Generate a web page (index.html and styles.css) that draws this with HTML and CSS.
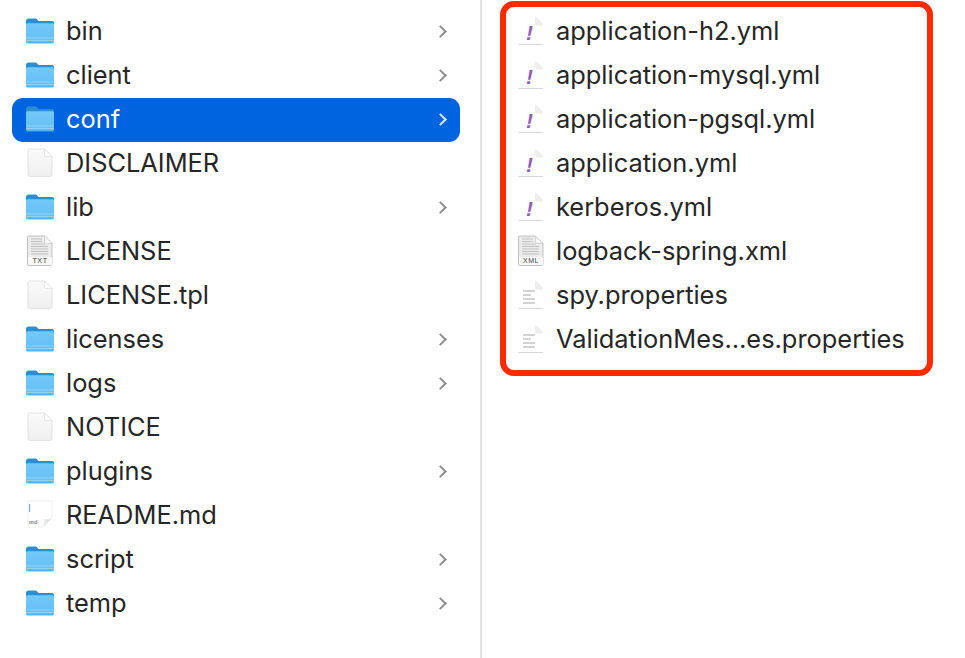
FILE: index.html
```html
<!DOCTYPE html>
<html lang="en">
<head>
<meta charset="utf-8">
<title>conf</title>
<link rel="stylesheet" href="styles.css">
</head>
<body>
<svg class="defs" width="0" height="0" aria-hidden="true">
  <defs>
    <linearGradient id="fbody" x1="0" y1="0" x2="0" y2="1">
      <stop offset="0" stop-color="#74c8fa"/>
      <stop offset="1" stop-color="#62bdf5"/>
    </linearGradient>
    <linearGradient id="dbody" x1="0" y1="0" x2="0" y2="1">
      <stop offset="0" stop-color="#fafafa"/>
      <stop offset="1" stop-color="#efefef"/>
    </linearGradient>
    <symbol id="folder" viewBox="0 0 28 28">
      <path d="M0 4.500C0 2.800 1 1.600 2.600 1.600H9c1 0 1.600.3 2.300 1.100L12.600 4H26c1.200 0 2 .8 2 2v18c0 1.400-.8 2-2 2H2c-1.200 0-2-.6-2-2Z" fill="#2a8fd2"/>
      <path d="M0 8C0 6.800 .8 6.200 2 6.200H26c1.200 0 2 .6 2 1.800V24c0 1.200-.8 1.800-2 1.800H2c-1.200 0-2-.6-2-1.800Z" fill="url(#fbody)"/>
      <rect x="0" y="20.500" width="28" height="1" fill="#8fd3fa"/>
      <rect x="0" y="23" width="28" height="1" fill="#8fd3fa"/>
      <path d="M0 24.800c0 1 .8 1.400 2 1.400H26c1.200 0 2-.4 2-1.400v.8c0 .9-.8 1.400-2 1.400H2C.8 27 0 26.500 0 25.600Z" fill="#9a9a9a" opacity=".6"/>
    </symbol>
    <symbol id="doc" viewBox="0 0 26 30">
      <path d="M2.500 1H17l7.500 7.500V26.500a2 2 0 0 1-2 2H2.500a2 2 0 0 1-2-2V3a2 2 0 0 1 2-2Z" transform="translate(.5 0)" fill="url(#dbody)" stroke="#dcdcdc" stroke-width=".8"/>
      <path d="M17.500 1V7a1.500 1.500 0 0 0 1.500 1.500H25Z" fill="#fff" stroke="#d8d8d8" stroke-width=".6"/>
    </symbol>
    <symbol id="lined" viewBox="0 0 26 32">
      <path d="M2 1H17.500L25 8.500V29a1.500 1.500 0 0 1-1.500 1.500H2A1.500 1.500 0 0 1 .5 29V2.500A1.500 1.500 0 0 1 2 1Z" fill="#ececec" stroke="#b4b4b4" stroke-width=".8"/>
      <path d="M17.500 1V7a1.500 1.500 0 0 0 1.500 1.500H25Z" fill="#fafafa" stroke="#c4c4c4" stroke-width=".6"/>
      <path d="M4 4h11M4 6.500h11M4 9h14M4 11.500h17M4 14h17M4 16.500h17M4 19h17" stroke="#c0c0c0" stroke-width="1"/>
      <path d="M1 22H25V29a1 1 0 0 1-1 1H2a1 1 0 0 1-1-1Z" fill="#f7f7f7"/>
    </symbol>
    <symbol id="plain" viewBox="0 0 26 30">
      <path d="M1 1H17.500L25 8.500V28H1Z" fill="#fff"/>
      <path d="M17 1.500H19L25 8V9.500H19.500A2.500 2.500 0 0 1 17 7Z" fill="#eee"/>
      <path d="M.5 28.500H25" stroke="#d6d6d6" stroke-width="1"/>
    </symbol>
  </defs>
</svg>

<main class="browser">
  <section class="column column-left">
    <div class="row"><svg class="ficon"><use href="#folder"/></svg><span class="name">bin</span><span class="chev"></span></div>
    <div class="row"><svg class="ficon"><use href="#folder"/></svg><span class="name">client</span><span class="chev"></span></div>
    <div class="row selected"><svg class="ficon"><use href="#folder"/></svg><span class="name">conf</span><span class="chev"></span></div>
    <div class="row"><svg class="dicon"><use href="#doc"/></svg><span class="name">DISCLAIMER</span></div>
    <div class="row"><svg class="ficon"><use href="#folder"/></svg><span class="name">lib</span><span class="chev"></span></div>
    <div class="row">
      <svg class="dicon tall" viewBox="0 0 26 32"><use href="#lined"/><text class="tag" x="13" y="28.200">TXT</text></svg>
      <span class="name">LICENSE</span>
    </div>
    <div class="row"><svg class="dicon"><use href="#doc"/></svg><span class="name">LICENSE.tpl</span></div>
    <div class="row"><svg class="ficon"><use href="#folder"/></svg><span class="name">licenses</span><span class="chev"></span></div>
    <div class="row"><svg class="ficon"><use href="#folder"/></svg><span class="name">logs</span><span class="chev"></span></div>
    <div class="row"><svg class="dicon"><use href="#doc"/></svg><span class="name">NOTICE</span></div>
    <div class="row"><svg class="ficon"><use href="#folder"/></svg><span class="name">plugins</span><span class="chev"></span></div>
    <div class="row">
      <svg class="dicon" viewBox="0 0 26 30">
        <path d="M1 1H25V18L16 27H1Z" fill="#fff" stroke="#ececec" stroke-width=".8"/>
        <path d="M25 18C22 19.500 18 19.500 17 19C18 22 17.500 25 16 27Z" fill="#e4e4e4"/>
        <rect x="2" y="4" width="1.200" height="8" fill="#7fb0e6"/>
        <text class="tag tag-md" x="2" y="24">md</text>
      </svg>
      <span class="name">README.md</span>
    </div>
    <div class="row"><svg class="ficon"><use href="#folder"/></svg><span class="name">script</span><span class="chev"></span></div>
    <div class="row"><svg class="ficon"><use href="#folder"/></svg><span class="name">temp</span><span class="chev"></span></div>
  </section>

  <section class="column column-right">
    <div class="row"><svg class="dicon" viewBox="0 0 26 30"><use href="#plain"/><text class="bang" x="11.500" y="24">!</text></svg><span class="name">application-h2.yml</span></div>
    <div class="row"><svg class="dicon" viewBox="0 0 26 30"><use href="#plain"/><text class="bang" x="11.500" y="24">!</text></svg><span class="name">application-mysql.yml</span></div>
    <div class="row"><svg class="dicon" viewBox="0 0 26 30"><use href="#plain"/><text class="bang" x="11.500" y="24">!</text></svg><span class="name">application-pgsql.yml</span></div>
    <div class="row"><svg class="dicon" viewBox="0 0 26 30"><use href="#plain"/><text class="bang" x="11.500" y="24">!</text></svg><span class="name">application.yml</span></div>
    <div class="row"><svg class="dicon" viewBox="0 0 26 30"><use href="#plain"/><text class="bang" x="11.500" y="24">!</text></svg><span class="name">kerberos.yml</span></div>
    <div class="row">
      <svg class="dicon tall" viewBox="0 0 26 32"><use href="#lined"/><text class="tag" x="13" y="28.200">XML</text></svg>
      <span class="name">logback-spring.xml</span>
    </div>
    <div class="row">
      <svg class="dicon" viewBox="0 0 26 30"><use href="#plain"/><path class="lines" d="M5 11h12M5 15h8M5 19h12M5 23h12"/></svg>
      <span class="name">spy.properties</span>
    </div>
    <div class="row">
      <svg class="dicon" viewBox="0 0 26 30"><use href="#plain"/><path class="lines" d="M5 11h12M5 15h8M5 19h12M5 23h12"/></svg>
      <span class="name">ValidationMes…es.properties</span>
    </div>
    <div class="highlight"></div>
  </section>
</main>
</body>
</html>
```

FILE: styles.css
```css
* { box-sizing: border-box; }

html, body {
  margin: 0;
  height: 658px;
  background: #fff;
  overflow: hidden;
}

.defs { position: absolute; }

.browser {
  display: flex;
  height: 658px;
  font-family: Inter, "Liberation Sans", sans-serif;
  font-size: 25.4px;
  color: #262626;
}

.column { padding-top: 10px; }

.column-left {
  width: 482px;
  padding-left: 12px;
  padding-right: 20px;
  border-right: 2px solid #e4e4e4;
}

.column-right {
  position: relative;
  flex: 1;
  padding-left: 24px;
}

.row {
  display: flex;
  align-items: center;
  height: 44px;
  padding: 0 13px 2px 14px;
  border-radius: 11px;
}

.column-right .row { padding-left: 11px; }

.selected {
  background: #0064e1;
  color: #fff;
}

.ficon { flex: none; width: 28px; height: 28px; margin-right: 13px; }

.dicon { flex: none; width: 26px; height: 30px; margin-left: 1px; margin-right: 13px; }

.tall { height: 32px; }

.column-right .dicon { margin-right: 12px; }

.name { flex: 1; margin-bottom: 2px; margin-left: -1px; white-space: nowrap; }

.dicon + .name { margin-left: 0; }

.chev {
  flex: none;
  width: 9px;
  height: 9px;
  margin-right: 2px;
  border-top: 2px solid #8e8e8e;
  border-right: 2px solid #8e8e8e;
  transform: rotate(45deg);
}

.selected .chev { border-color: #dce9fb; }

.tag {
  font-family: "Liberation Sans", sans-serif;
  font-size: 7px;
  letter-spacing: .6px;
  fill: #444;
  text-anchor: middle;
}

.tag-md { font-size: 5.500px; font-weight: 700; letter-spacing: 0; fill: #888; text-anchor: start; }

.bang {
  font-family: "Liberation Sans", sans-serif;
  font-size: 21px;
  font-style: italic;
  font-weight: 700;
  fill: #8f5fb5;
  text-anchor: middle;
}

.lines { stroke: #c4c4c4; stroke-width: 1.400; fill: none; }

.highlight {
  position: absolute;
  left: 18px;
  top: 1px;
  width: 433px;
  height: 375px;
  border: 6px solid #ff2a00;
  border-radius: 14px;
  pointer-events: none;
}
```
